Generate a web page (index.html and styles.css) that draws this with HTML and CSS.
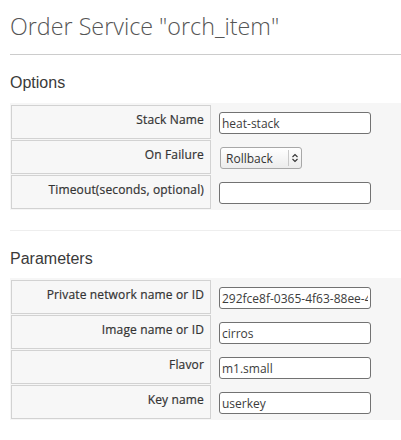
FILE: index.html
```html
<!DOCTYPE html>
<html>
<head>
<meta charset="utf-8">
<link rel="stylesheet" href="styles.css">
</head>
<body>
<div class="page">
  <h1 class="title">Order Service "orch_item"</h1>
  <section class="group">
    <h2 class="group-title">Options</h2>
    <table class="form">
      <tr>
        <td class="label">Stack Name</td>
        <td class="field"><input class="text" type="text" value="heat-stack"></td>
      </tr>
      <tr>
        <td class="label">On Failure</td>
        <td class="field">
          <span class="select">
            <span class="select-value">Rollback</span>
            <span class="select-arrow">
              <svg width="8" height="12" viewBox="0 0 8 12"><path d="M1.5 5 L4 2.5 L6.5 5 M1.5 7 L4 9.5 L6.5 7" fill="none" stroke="#333" stroke-width="1.1"/></svg>
            </span>
          </span>
        </td>
      </tr>
      <tr>
        <td class="label">Timeout(seconds, optional)</td>
        <td class="field"><input class="text" type="text" value=""></td>
      </tr>
    </table>
  </section>
  <section class="group group-sep">
    <h2 class="group-title">Parameters</h2>
    <table class="form">
      <tr>
        <td class="label">Private network name or ID</td>
        <td class="field"><input class="text" type="text" value="292fce8f-0365-4f63-88ee-4a7d1c2b9e10"></td>
      </tr>
      <tr>
        <td class="label">Image name or ID</td>
        <td class="field"><input class="text" type="text" value="cirros"></td>
      </tr>
      <tr>
        <td class="label">Flavor</td>
        <td class="field"><input class="text" type="text" value="m1.small"></td>
      </tr>
      <tr>
        <td class="label">Key name</td>
        <td class="field"><input class="text" type="text" value="userkey"></td>
      </tr>
    </table>
  </section>
</div>
</body>
</html>
```
FILE: styles.css
```css
html, body {
  margin: 0;
  padding: 0;
  background: #ffffff;
}
.page {
  padding: 0 0 0 10px;
}
.title {
  margin: 11px 0 0;
  padding-bottom: 13px;
  border-bottom: 1px solid #cccccc;
  font-family: "Open Sans", "DejaVu Sans", sans-serif;
  font-weight: 300;
  font-size: 23.3px;
  line-height: 30px;
  color: #555555;
  white-space: nowrap;
}
.group-sep {
  margin-top: 20px;
  border-top: 1px solid #eeeeee;
}
.group-title {
  margin: 18px 0 10px;
  font-family: "Liberation Sans", Arial, sans-serif;
  font-weight: 400;
  font-size: 16px;
  line-height: 20px;
  color: #3a3a3a;
}
.group-sep .group-title {
  margin-bottom: 9px;
}
.form {
  width: 100%;
  border-collapse: separate;
  border-spacing: 1px;
  padding-top: 1px;
  background: #f6f6f6;
}
.form td {
  padding: 0;
  vertical-align: top;
}
.label {
  width: 200px;
  border: 1px solid #d2d2d2;
  background: #f7f7f7;
  padding: 5px 6px 9px 0 !important;
  text-align: right;
  font-family: "Open Sans", "DejaVu Sans", sans-serif;
  font-weight: 400;
  font-size: 12px;
  line-height: 18px;
  color: #333333;
  -webkit-text-stroke: 0.2px #333333;
  letter-spacing: 0.15px;
  white-space: nowrap;
  box-sizing: border-box;
}
.field {
  padding: 7px 0 0 7px !important;
}
.text {
  display: block;
  box-sizing: border-box;
  width: 152px;
  height: 22px;
  margin: 0;
  padding: 0 2px;
  border: 1px solid #727272;
  border-radius: 3px;
  background: #ffffff;
  font-family: "Open Sans", "DejaVu Sans", sans-serif;
  font-size: 12px;
  color: #3c3c3c;
  outline: none;
}
.select {
  display: flex;
  align-items: center;
  box-sizing: border-box;
  width: 82px;
  height: 22px;
  margin-left: 1px;
  border: 1px solid #a8a8a8;
  border-radius: 3px;
  background: linear-gradient(#ffffff, #ececec);
  font-family: "Open Sans", "DejaVu Sans", sans-serif;
  font-size: 12px;
  color: #333333;
}
.select-value {
  flex: 1;
  padding-left: 5px;
}
.select-arrow {
  display: flex;
  align-items: center;
  justify-content: center;
  width: 12px;
  height: 16px;
  border-left: 1px solid #c8c8c8;
}
.select-arrow svg {
  display: block;
}
```
